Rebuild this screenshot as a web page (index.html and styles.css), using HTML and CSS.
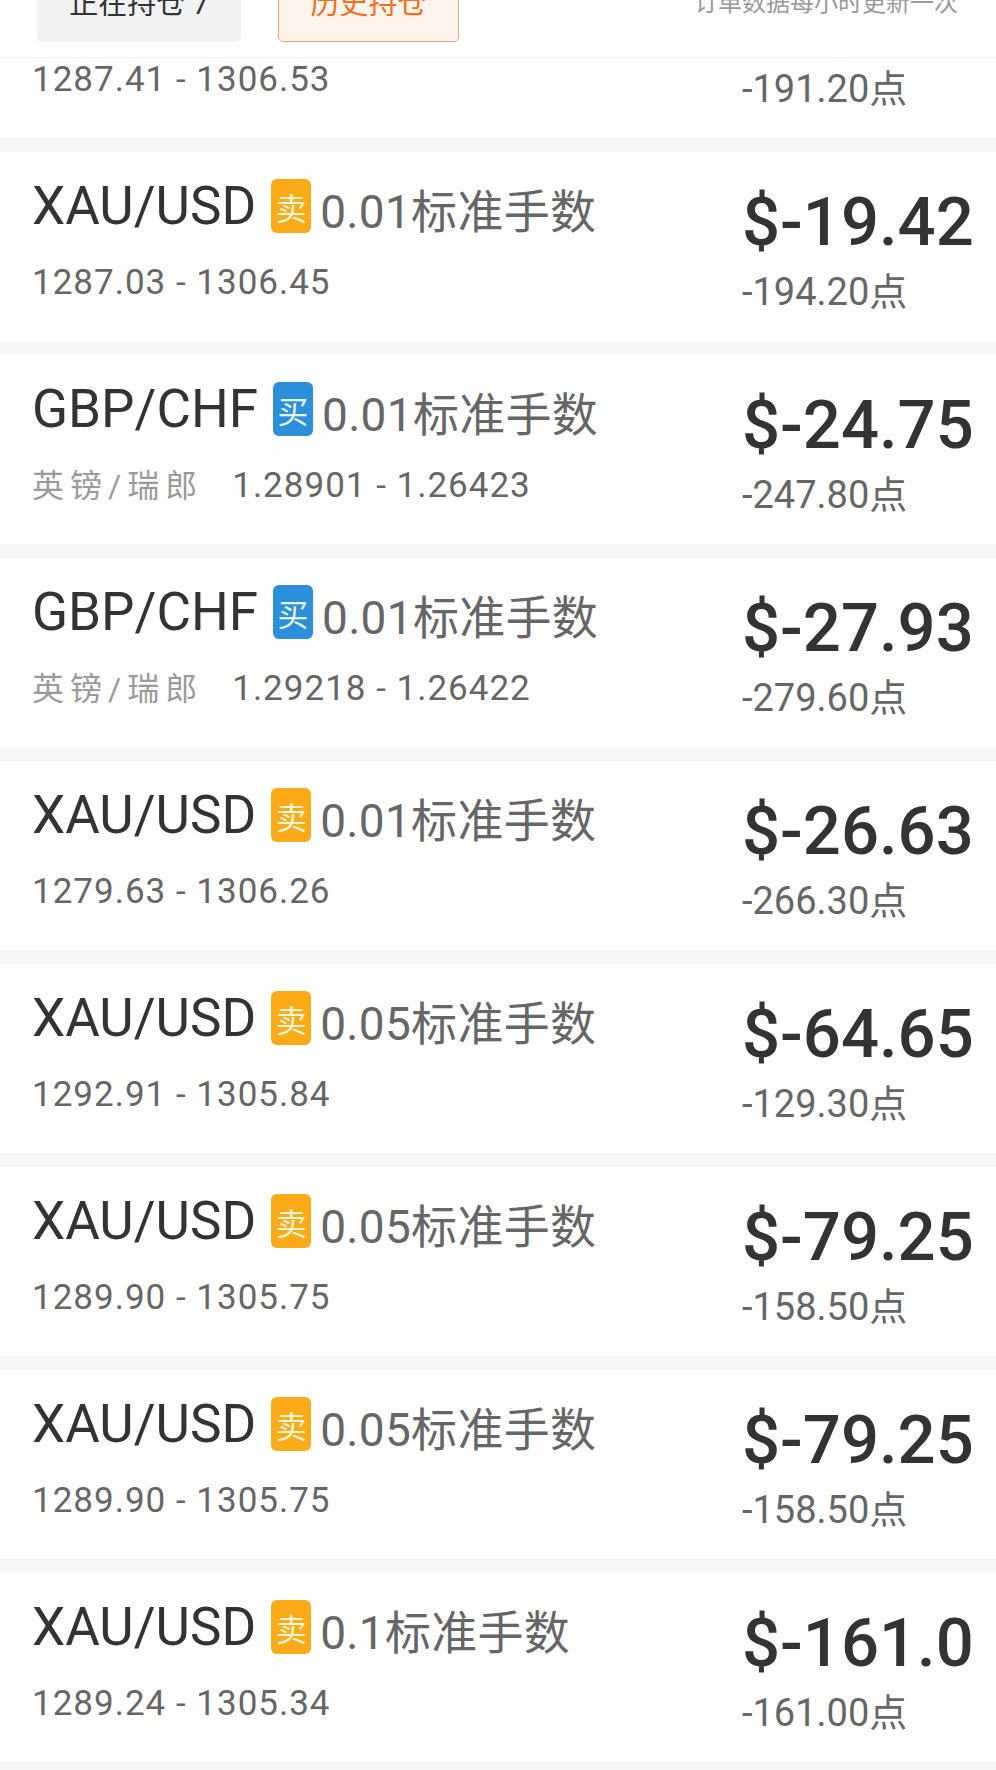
FILE: index.html
```html
<!DOCTYPE html>
<html>
<head>
  <title>持仓记录</title>
  <meta http-equiv="Content-Type" content="text/html; charset=UTF-8">
  <link rel="stylesheet" href="styles.css">
</head>
<body>
  <div class="header">
    <div class="tabs">
      <div class="tab tab-open">正在持仓 7</div>
      <div class="tab tab-history">历史持仓</div>
    </div>
    <div class="note">订单数据每小时更新一次</div>
  </div>

  <div class="list">
    <div class="row">
      <div class="info">
        <div class="head">
          <span class="symbol">XAU/USD</span>
          <span class="badge sell">卖</span>
          <span class="lots">0.01标准手数</span>
        </div>
        <div class="sub"><span class="price">1287.41 - 1306.53</span></div>
      </div>
      <div class="result">
        <div class="amount">$-19.12</div>
        <div class="points">-191.20点</div>
      </div>
    </div>

    <div class="row">
      <div class="info">
        <div class="head">
          <span class="symbol">XAU/USD</span>
          <span class="badge sell">卖</span>
          <span class="lots">0.01标准手数</span>
        </div>
        <div class="sub"><span class="price">1287.03 - 1306.45</span></div>
      </div>
      <div class="result">
        <div class="amount">$-19.42</div>
        <div class="points">-194.20点</div>
      </div>
    </div>

    <div class="row">
      <div class="info">
        <div class="head">
          <span class="symbol">GBP/CHF</span>
          <span class="badge buy">买</span>
          <span class="lots">0.01标准手数</span>
        </div>
        <div class="sub"><span class="name">英镑/瑞郎</span><span class="price">1.28901 - 1.26423</span></div>
      </div>
      <div class="result">
        <div class="amount">$-24.75</div>
        <div class="points">-247.80点</div>
      </div>
    </div>

    <div class="row">
      <div class="info">
        <div class="head">
          <span class="symbol">GBP/CHF</span>
          <span class="badge buy">买</span>
          <span class="lots">0.01标准手数</span>
        </div>
        <div class="sub"><span class="name">英镑/瑞郎</span><span class="price">1.29218 - 1.26422</span></div>
      </div>
      <div class="result">
        <div class="amount">$-27.93</div>
        <div class="points">-279.60点</div>
      </div>
    </div>

    <div class="row">
      <div class="info">
        <div class="head">
          <span class="symbol">XAU/USD</span>
          <span class="badge sell">卖</span>
          <span class="lots">0.01标准手数</span>
        </div>
        <div class="sub"><span class="price">1279.63 - 1306.26</span></div>
      </div>
      <div class="result">
        <div class="amount">$-26.63</div>
        <div class="points">-266.30点</div>
      </div>
    </div>

    <div class="row">
      <div class="info">
        <div class="head">
          <span class="symbol">XAU/USD</span>
          <span class="badge sell">卖</span>
          <span class="lots">0.05标准手数</span>
        </div>
        <div class="sub"><span class="price">1292.91 - 1305.84</span></div>
      </div>
      <div class="result">
        <div class="amount">$-64.65</div>
        <div class="points">-129.30点</div>
      </div>
    </div>

    <div class="row">
      <div class="info">
        <div class="head">
          <span class="symbol">XAU/USD</span>
          <span class="badge sell">卖</span>
          <span class="lots">0.05标准手数</span>
        </div>
        <div class="sub"><span class="price">1289.90 - 1305.75</span></div>
      </div>
      <div class="result">
        <div class="amount">$-79.25</div>
        <div class="points">-158.50点</div>
      </div>
    </div>

    <div class="row">
      <div class="info">
        <div class="head">
          <span class="symbol">XAU/USD</span>
          <span class="badge sell">卖</span>
          <span class="lots">0.05标准手数</span>
        </div>
        <div class="sub"><span class="price">1289.90 - 1305.75</span></div>
      </div>
      <div class="result">
        <div class="amount">$-79.25</div>
        <div class="points">-158.50点</div>
      </div>
    </div>

    <div class="row">
      <div class="info">
        <div class="head">
          <span class="symbol">XAU/USD</span>
          <span class="badge sell">卖</span>
          <span class="lots">0.1标准手数</span>
        </div>
        <div class="sub"><span class="price">1289.24 - 1305.34</span></div>
      </div>
      <div class="result">
        <div class="amount">$-161.0</div>
        <div class="points">-161.00点</div>
      </div>
    </div>
  </div>
</body>
</html>
```

FILE: styles.css
```css
body {
  margin: 0;
  padding: 0;
  font-family: Roboto, "Noto Sans CJK SC", sans-serif;
  background-color: #f6f6f6;
  color: #333333;
}

/* sticky header, scrolled so its top is cut off */
.header {
  height: 58px;
  box-sizing: border-box;
  display: flex;
  align-items: flex-end;
  padding: 0 38px 15px 37px;
  background-color: #ffffff;
  border-bottom: 1px solid #f1f1f1;
  overflow: hidden;
}

.tabs {
  display: flex;
  gap: 37px;
}

.tab {
  height: 82px;
  box-sizing: border-box;
  display: flex;
  align-items: center;
  justify-content: center;
  border-radius: 5px;
  font-size: 29px;
}

.tab-open {
  width: 204px;
  background-color: #f1f2f4;
  color: #333333;
}

.tab-history {
  width: 181px;
  background-color: #fff4ec;
  border: 1px solid #f0a46c;
  color: #f26f22;
}

.note {
  margin-left: auto;
  margin-bottom: 24px;
  font-size: 24px;
  line-height: 30px;
  color: #9a9a9a;
}

.list {
  overflow: hidden;
}

.row {
  display: flex;
  height: 189px;
  margin-bottom: 14px;
  padding-left: 32px;
  background-color: #ffffff;
}

/* first row is scrolled half under the header */
.row:first-child {
  margin-top: -109px;
}

.info {
  flex: 1;
}

.head {
  display: flex;
  align-items: flex-start;
  height: 54px;
  margin-top: 27px;
}

.symbol {
  font-size: 53px;
  line-height: 54px;
  color: #333333;
}

.badge {
  width: 40px;
  height: 54px;
  margin-left: 15px;
  border-radius: 6px;
  display: flex;
  align-items: center;
  justify-content: center;
  font-size: 31px;
}

.badge.sell {
  background-color: #fbaa18;
  color: #fff6d8;
}

.badge.buy {
  background-color: #2b8fd9;
  color: #e6f4ff;
}

.lots {
  margin-left: 9px;
  margin-top: 6px;
  font-size: 46px;
  line-height: 54px;
  letter-spacing: 0.3px;
  color: #666666;
}

.sub {
  display: flex;
  align-items: baseline;
  margin-top: 30px;
  line-height: 40px;
}

.name {
  margin-right: 29px;
  font-size: 32px;
  letter-spacing: 6px;
  color: #9a9a9a;
}

.price {
  font-size: 35px;
  letter-spacing: 1px;
  color: #666666;
}

.result {
  width: 254px;
  padding-top: 35px;
}

.amount {
  font-size: 67px;
  line-height: 70px;
  font-weight: 500;
  color: #333333;
}

.points {
  margin-top: 13px;
  font-size: 38px;
  line-height: 44px;
  color: #666666;
}
```
